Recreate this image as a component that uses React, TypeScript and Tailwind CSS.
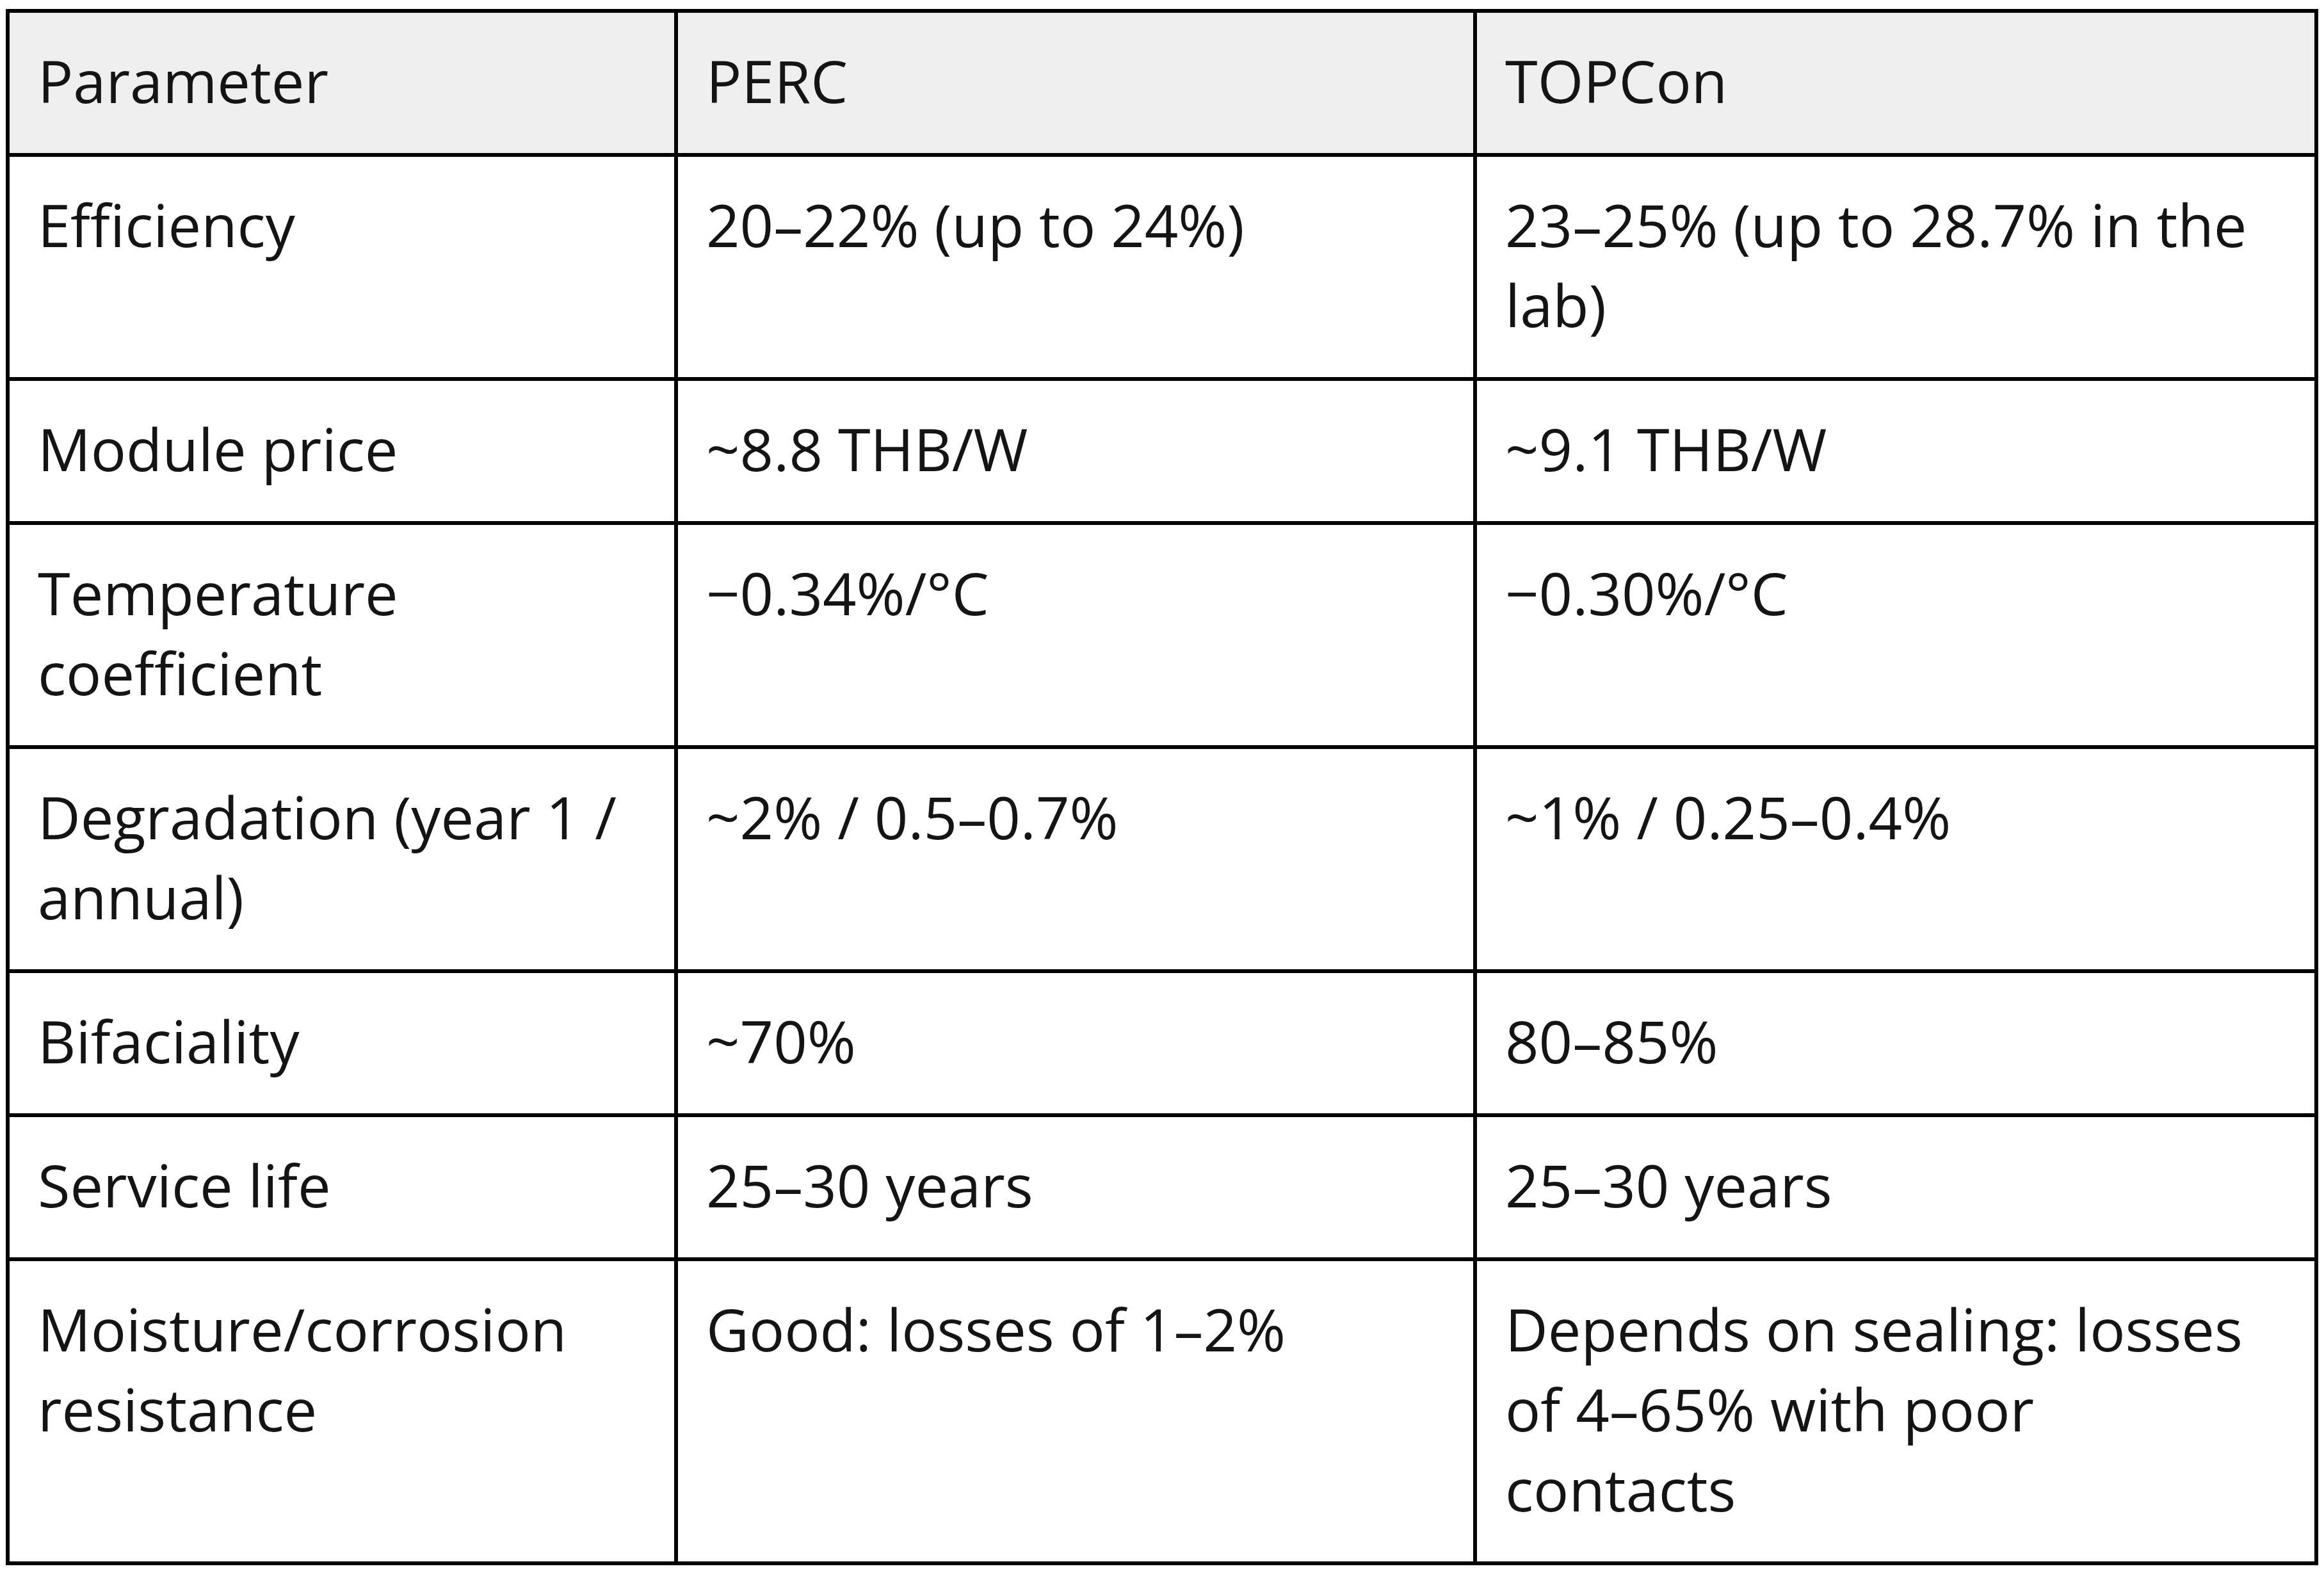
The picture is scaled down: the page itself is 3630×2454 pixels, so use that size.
const rows: [string, string, string][] = [
  ['Efficiency', '20–22% (up to 24%)', '23–25% (up to 28.7% in the lab)'],
  ['Module price', '~8.8 THB/W', '~9.1 THB/W'],
  ['Temperature coefficient', '−0.34%/°C', '−0.30%/°C'],
  ['Degradation (year 1 / annual)', '~2% / 0.5–0.7%', '~1% / 0.25–0.4%'],
  ['Bifaciality', '~70%', '80–85%'],
  ['Service life', '25–30 years', '25–30 years'],
  ['Moisture/corrosion resistance', 'Good: losses of 1–2%', 'Depends on sealing: losses of 4–65% with poor contacts'],
]

const cell =
  'border-r-[6px] border-b-[6px] border-black pl-[44px] pt-[43px] pb-[51px] align-top text-left font-normal'

export default function App() {
  return (
    <div className="min-h-screen bg-white pl-[9px] pt-[14px] font-['Open_Sans',sans-serif] text-[92px] leading-[125px] text-[#141414]">
      <table className="w-[3612px] table-fixed border-separate border-spacing-0 border-l-[6px] border-t-[6px] border-black">
        <thead>
          <tr className="bg-[#efefef]">
            <th className={`${cell} w-[1044px] pr-[40px]`}>Parameter</th>
            <th className={`${cell} w-[1248px] pr-[40px]`}>PERC</th>
            <th className={`${cell} w-[1314px] pr-[90px]`}>TOPCon</th>
          </tr>
        </thead>
        <tbody>
          {rows.map(([param, perc, topcon]) => (
            <tr key={param}>
              <td className={`${cell} pr-[40px]`}>{param}</td>
              <td className={`${cell} pr-[40px]`}>{perc}</td>
              <td className={`${cell} pr-[90px]`}>{topcon}</td>
            </tr>
          ))}
        </tbody>
      </table>
    </div>
  )
}
